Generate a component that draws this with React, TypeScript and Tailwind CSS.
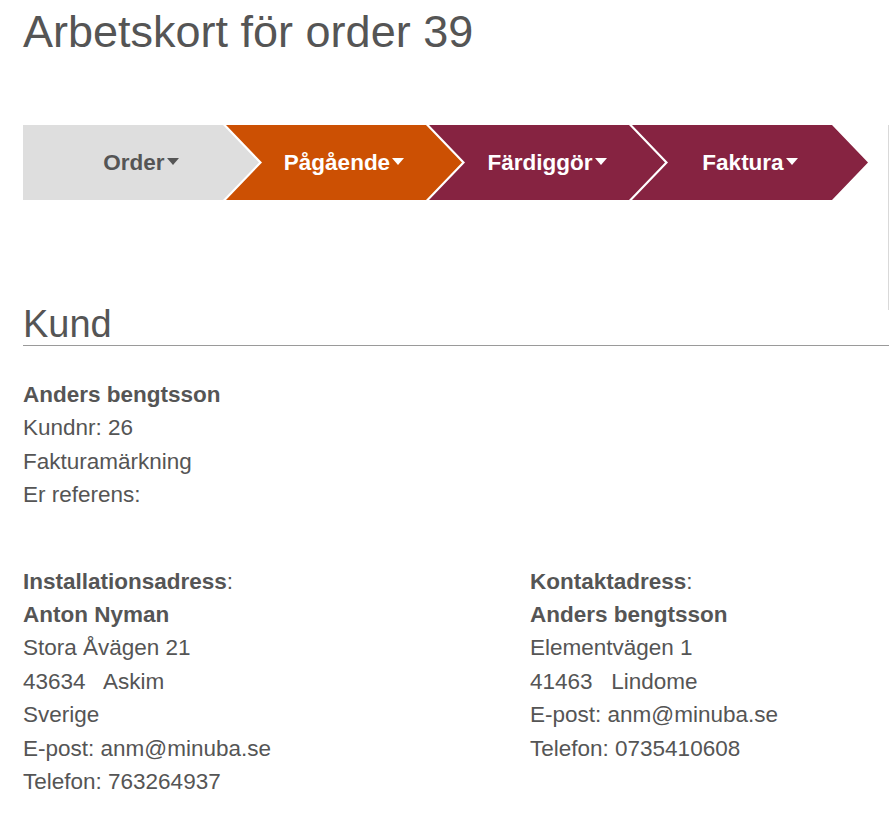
import React from "react";

const Caret = ({ color }: { color: string }) => (
  <svg width="12" height="7" viewBox="0 0 12 7" className="ml-[2px] mt-[-3px] shrink-0">
    <polygon points="0,0 12,0 6,7" fill={color} />
  </svg>
);

const steps = [
  { label: "Order", bg: "bg-[#dedede]", text: "text-[#555555]", caret: "#555555", first: true },
  { label: "Pågående", bg: "bg-[#cc5003]", text: "text-white", caret: "#ffffff", first: false },
  { label: "Färdiggör", bg: "bg-[#862341]", text: "text-white", caret: "#ffffff", first: false },
  { label: "Faktura", bg: "bg-[#862341]", text: "text-white", caret: "#ffffff", first: false },
];

const firstClip = "polygon(0 0, calc(100% - 36px) 0, 100% 50%, calc(100% - 36px) 100%, 0 100%)";
const restClip =
  "polygon(0 0, calc(100% - 36px) 0, 100% 50%, calc(100% - 36px) 100%, 0 100%, 36px 50%)";

export default function App() {
  return (
    <div
      className="bg-white min-h-[820px] pl-[23px] text-[#555555]"
      style={{ fontFamily: '"Liberation Sans", Arial, sans-serif' }}
    >
      <h1 className="pt-[9px] text-[45px] leading-[45px] font-normal">Arbetskort för order 39</h1>

      <div className="mt-[71px] flex h-[75px] items-start">
        <div className="flex h-[75px]">
          {steps.map((s, i) => (
            <div
              key={s.label}
              className={`flex h-[75px] w-[236px] items-center justify-center ${s.bg} ${s.text} ${
                i === 0 ? "" : "ml-[-33px]"
              }`}
              style={{ clipPath: s.first ? firstClip : restClip }}
            >
              <span className="text-[22.5px] leading-[22px] font-bold">{s.label}</span>
              <Caret color={s.caret} />
            </div>
          ))}
        </div>
        <div className="ml-auto h-[185px] w-px shrink-0 bg-[#d9d9d9]" />
      </div>

      <h2 className="mt-[105px] border-b border-[#9a9a9a] pb-[2px] text-[38px] leading-[38px] font-normal">
        Kund
      </h2>

      <div className="mt-[32px] text-[22.5px] leading-[33.4px]">
        <div className="font-bold">Anders bengtsson</div>
        <div>Kundnr: 26</div>
        <div>Fakturamärkning</div>
        <div>Er referens:</div>
      </div>

      <div className="mt-[53px] grid grid-cols-[507px_1fr] text-[22.5px] leading-[33.4px]">
        <div>
          <div>
            <span className="font-bold">Installationsadress</span>:
          </div>
          <div className="font-bold">Anton Nyman</div>
          <div>Stora Åvägen 21</div>
          <div className="whitespace-pre">{"43634   Askim"}</div>
          <div>Sverige</div>
          <div>E-post: anm@minuba.se</div>
          <div>Telefon: 763264937</div>
        </div>
        <div>
          <div>
            <span className="font-bold">Kontaktadress</span>:
          </div>
          <div className="font-bold">Anders bengtsson</div>
          <div>Elementvägen 1</div>
          <div className="whitespace-pre">{"41463   Lindome"}</div>
          <div>E-post: anm@minuba.se</div>
          <div>Telefon: 0735410608</div>
        </div>
      </div>
    </div>
  );
}
